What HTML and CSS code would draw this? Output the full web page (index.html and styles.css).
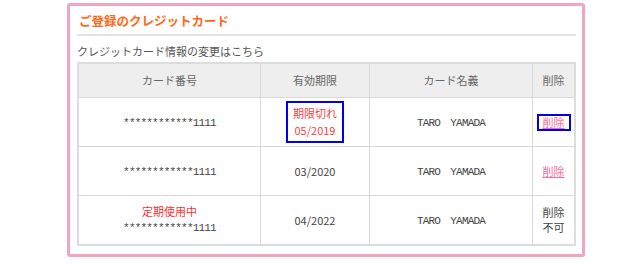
FILE: index.html
```html
<!doctype html>
<html lang="ja">
<head>
    <meta charset="utf-8">
    <meta name="viewport" content="width=device-width, initial-scale=1.0">
    <title>ご登録のクレジットカード</title>
    <link rel="stylesheet" href="styles.css">
</head>
<body>
    <div class="card-box">
        <h2 class="card-title">ご登録のクレジットカード</h2>
        <p class="card-note">クレジットカード情報の変更はこちら</p>
        <table class="card-table">
            <thead>
                <tr>
                    <th class="col-num">カード番号</th>
                    <th class="col-exp">有効期限</th>
                    <th class="col-name">カード名義</th>
                    <th class="col-del">削除</th>
                </tr>
            </thead>
            <tbody>
                <tr>
                    <td><span class="mono">************1111</span></td>
                    <td><span class="expired">期限切れ<br>05/2019</span></td>
                    <td><span class="mono">TARO　YAMADA</span></td>
                    <td><a href="#" class="del-link focused">削除</a></td>
                </tr>
                <tr>
                    <td><span class="mono">************1111</span></td>
                    <td>03/2020</td>
                    <td><span class="mono">TARO　YAMADA</span></td>
                    <td><a href="#" class="del-link">削除</a></td>
                </tr>
                <tr>
                    <td><span class="in-use">定期使用中</span><br><span class="mono">************1111</span></td>
                    <td>04/2022</td>
                    <td><span class="mono">TARO　YAMADA</span></td>
                    <td class="no-del">削除<br>不可</td>
                </tr>
            </tbody>
        </table>
    </div>
</body>
</html>
```

FILE: styles.css
```css
body {
    margin: 0;
    padding: 0;
    background-color: #fff;
    font-family: "Noto Sans CJK JP", "Noto Sans", sans-serif;
    color: #444;
}
.card-box {
    width: 499px;
    margin: 3px 0 0 67px;
    padding: 0 6px 8px 7px;
    border: 3px solid #f0a6c2;
    border-radius: 3px;
}
.card-title {
    margin: 0;
    padding: 7px 0 5px 2px;
    font-size: 12.5px;
    line-height: 16px;
    font-weight: bold;
    color: #ff6a1a;
    border-bottom: 2px solid #e2e2e2;
}
.card-note {
    margin: 0;
    padding: 8px 0 4px 0;
    font-size: 11px;
    line-height: 14px;
    color: #555;
}
.card-table {
    width: 100%;
    border-collapse: collapse;
    border: 2px solid #dcdcdc;
    font-size: 11px;
    line-height: 15px;
}
.card-table th,
.card-table td {
    border: 1px solid #d8d8d8;
    text-align: center;
    padding: 0;
}
.card-table th {
    height: 33px;
    background-color: #eee;
    font-weight: normal;
    color: #666;
}
.card-table td {
    height: 48px;
    color: #444;
}
.col-num { width: 181px; }
.col-exp { width: 108px; }
.col-name { width: 162px; }
.mono {
    font-family: "Liberation Mono", monospace;
    font-size: 11px;
    letter-spacing: -0.8px;
    color: #444;
}
.expired {
    display: inline-block;
    width: 54px;
    padding: 2px 0;
    border: 2px solid #0000ee;
    color: #ff4040;
    line-height: 17px;
}
.in-use {
    color: #ff3030;
}
.del-link {
    color: #ff6aa0;
    text-decoration: underline;
}
.del-link.focused {
    display: inline-block;
    width: 30px;
    line-height: 13px;
    border: 2px solid #0000ee;
}
.no-del {
    color: #666;
}
```
